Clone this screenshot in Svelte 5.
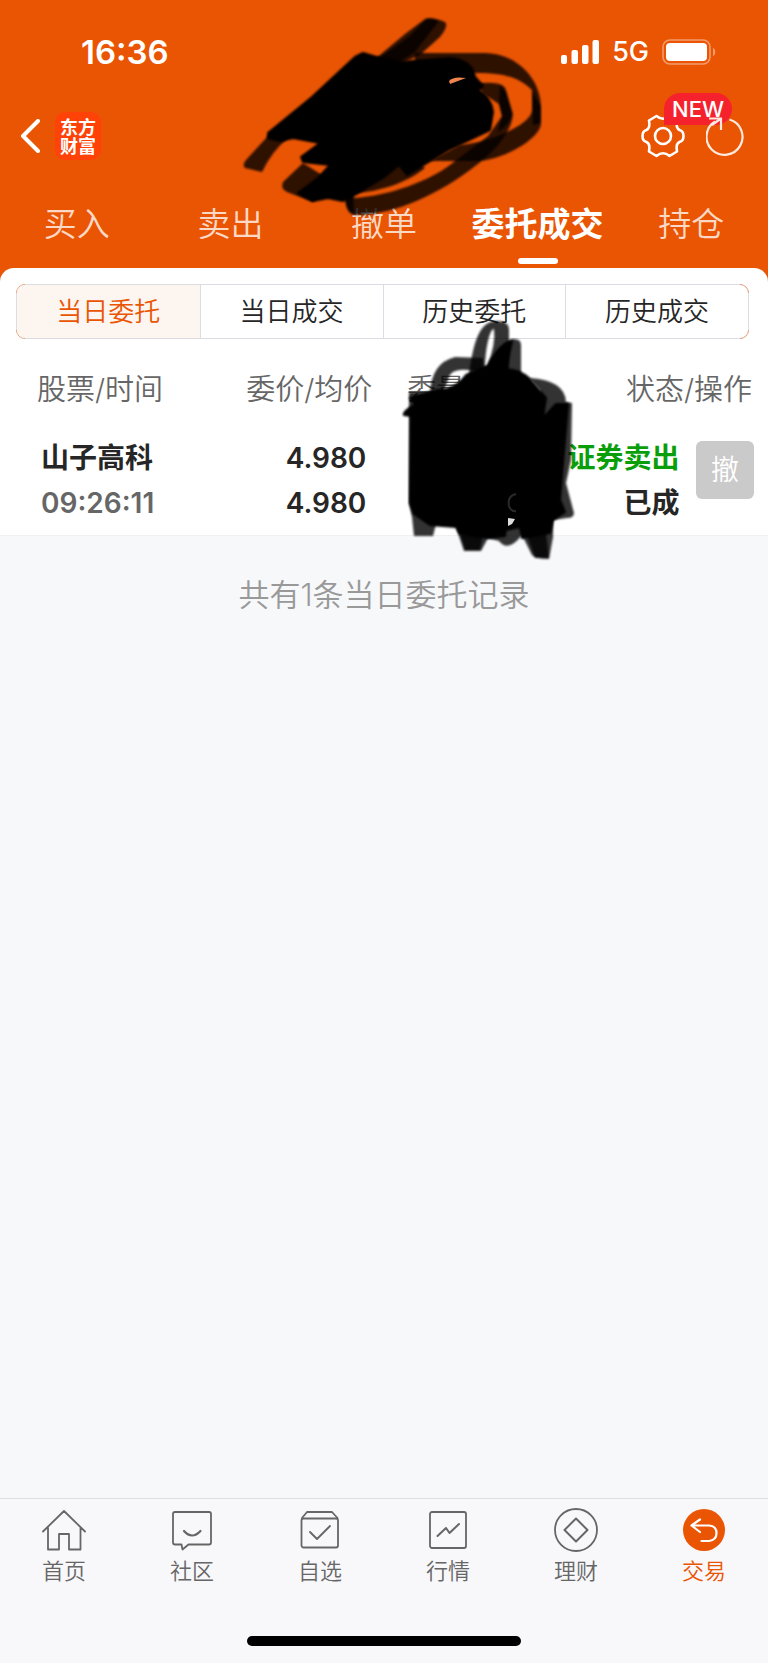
<script>
  let activeTab = $state('委托成交');
  let activeRange = $state('当日委托');
  let activeNav = $state('交易');

  const tabs = ['买入', '卖出', '撤单', '委托成交', '持仓'];
  const ranges = ['当日委托', '当日成交', '历史委托', '历史成交'];
  const navItems = ['首页', '社区', '自选', '行情', '理财', '交易'];

  const orders = [
    {
      name: '山子高科',
      time: '09:26:11',
      price: '4.980',
      average: '4.980',
      side: '证券卖出',
      status: '已成'
    }
  ];
</script>

<div class="app">
  <header class="header">
    <div class="status-bar">
      <span class="time">16:36</span>
      <div class="signals">
        <svg width="38" height="24" viewBox="0 0 38 24" fill="#fff" aria-hidden="true">
          <rect x="0" y="15" width="6" height="9" rx="2" />
          <rect x="10.5" y="10" width="6.5" height="14" rx="2" />
          <rect x="21" y="5" width="6.5" height="19" rx="2" />
          <rect x="31.5" y="0" width="6.5" height="24" rx="2" />
        </svg>
        <span class="network">5G</span>
        <svg width="54" height="26" viewBox="0 0 54 26" aria-hidden="true">
          <rect x="1" y="1" width="47" height="24" rx="7" fill="none" stroke="#f39b6c" stroke-width="1.6" />
          <rect x="4" y="4" width="41" height="18" rx="4" fill="#fff" />
          <path d="M51 9c3 1 3 7 0 8z" fill="#f39b6c" />
        </svg>
      </div>
    </div>

    <div class="toolbar">
      <button class="icon-btn" aria-label="返回">
        <svg width="20" height="34" viewBox="0 0 20 34" fill="none" stroke="#fff" stroke-width="4" stroke-linecap="round" stroke-linejoin="round">
          <path d="M18 2 3 17 18 32" />
        </svg>
      </button>
      <div class="logo">东方财富</div>
      <div class="actions">
        <button class="icon-btn" aria-label="设置">
          <svg width="44" height="44" viewBox="0 0 44 44" fill="none" stroke="#fff" stroke-width="2.6" stroke-linejoin="round">
            <path d="M15.500 2 Q22 7.500 28.500 2 L36 6.500 Q34.500 14 38.500 16 Q42.500 17 42.500 22 Q42.500 27 38.500 28 Q34.500 30 36 37.500 L28.500 42 Q22 36.500 15.500 42 L8 37.500 Q9.500 30 5.500 28 Q1.500 27 1.500 22 Q1.500 17 5.500 16 Q9.500 14 8 6.500 Z" />
            <circle cx="22" cy="22" r="8" />
          </svg>
        </button>
        <span class="badge">NEW</span>
        <button class="icon-btn refresh" aria-label="刷新">
          <svg width="38" height="40" viewBox="0 0 38 40" fill="none" stroke="#ffeadf" stroke-width="2.2">
            <path d="M23.500 3.500A18 18 0 1 1 9 5.500" />
            <path d="M3 2.500H15V14M15 2.500 6 9" />
          </svg>
        </button>
      </div>
    </div>

    <nav class="tabs">
      {#each tabs as tab}
        <button class="tab" class:active={activeTab === tab} onclick={() => (activeTab = tab)}>
          {tab}
        </button>
      {/each}
    </nav>

    <svg class="scribble scribble-top" width="310" height="220" viewBox="240 10 310 220" aria-hidden="true">
      <g class="marker">
        <path d="M425 19Q430 16 445 22Q449 26 440 37L421 54 380 75 362 70 405 34Z" />
        <path d="M410 36 425 20Q431 17 439 21L415 52 390 68 376 60Z" />
        <path d="M268 136 288 138Q272 151 262 172L245 168Q242 165 246 160Z" />
        <path d="M415 53H485C520 54 541 82 541 107V123C541 137 510 157 480 161H430L460 145C490 143 532 124 532 110V90C520 78 505 73 478 73H415Z" />
        <path d="M532 90 541 107V123L533 125Z" />
        <path d="M475 84Q503 80 506 90L513 114Q511 140 470 170C430 200 385 216 354 215Q345 213 345 195L352 190 354 198C390 196 430 180 450 165L488 136 502 116 499 104 485 95Z" />
        <path d="M500 85 506 92 512 114Q510 125 498 132L502 116 499 104Z" />
        <path d="M303 163 283 182Q280 189 287 192L313 202 330 180Z" />
        <path d="M354 193C380 192 408 182 425 168L405 150 350 180Z" />
        <path d="M345 194 353 190 354 214Q345 212 345 194Z" />
      </g>
      <path class="ink" d="M363 53 380 58 400 62 425 60 450 58Q472 60 475 77L483 86 478 90Q491 97 493 112L490 130 450 149 407 175 399 165 383 178 358 193 343 201 328 198 313 201 298 193 318 178 330 165 303 162 301 157 320 143 293 138 280 141 268 138V133L312 97 355 57Z" />
      <path d="M449 81Q453 76 466 78L458 81 450 84Z" fill="#ef844c" />
    </svg>
  </header>

  <main class="content">
    <div class="panel">
      <div class="segments">
        {#each ranges as range}
          <button class="segment" class:active={activeRange === range} onclick={() => (activeRange = range)}>
            {range}
          </button>
        {/each}
      </div>

      <table class="orders">
        <colgroup>
          <col class="w-stock" />
          <col class="w-price" />
          <col class="w-volume" />
          <col class="w-status" />
          <col class="w-action" />
        </colgroup>
        <thead>
          <tr>
            <th class="stock">股票/时间</th>
            <th class="price">委价/均价</th>
            <th class="volume">委量</th>
            <th class="status" colspan="2">状态/操作</th>
          </tr>
        </thead>
        <tbody>
          {#each orders as order}
            <tr>
              <td class="stock">{order.name}<br /><span class="muted">{order.time}</span></td>
              <td class="price">{order.price}<br />{order.average}</td>
              <td class="volume"></td>
              <td class="status"><span class="sell">{order.side}</span><br />{order.status}</td>
              <td class="action"><button class="cancel-btn">撤</button></td>
            </tr>
          {/each}
        </tbody>
      </table>

      <svg class="scribble scribble-row" width="180" height="250" viewBox="400 315 180 250" aria-hidden="true">
        <g class="marker">
          <path fill-rule="evenodd" d="M469 375C474 335 482 321 497 321Q509 321 509 330V380H469ZM485 366C486 345 490 329 494 329Q496 345 487 366Z" />
          <path d="M488 370Q496 345 512 339Q521 338 521 345V385H488Z" />
          <path d="M430 394Q431 363 455 357L483 358 484 373 468 370Q450 368 448 380L443 392Z" />
          <path d="M529 378Q565 380 566 402L572 403 571 460 566 483 574 513Q574 518 567 518L540 522V390Z" />
          <path d="M409 392H430L440 510 435 528 433 536H414L412 517 409 503Z" />
          <path d="M457 530 464 551H481L488 538 499 541Q508 553 522 535L532 555Q535 559 549 559L553 537 553 515H460Z" />
          <path d="M525 530 535 558H549L545 525Z" />
          <path d="M460 535 465 550H480L484 530Z" />
        </g>
        <path class="ink" d="M410 398 438 390Q455 390 466 375L488 366Q498 346 512 341L506 369Q525 371 532 382L546 398 543 418 556 404 568 404 560 500 565 512 553 520 550 533 522 538 520 527 506 530 509 522 508 514 505 536 488 538 460 534 456 527 430 525 414 514 410 503 411 416 404 415Q402 412 415 405Z" />
        <path d="M516 494Q507 496 509 506 511 512 516 511" fill="none" stroke="#2a2a2a" stroke-width="2" />
        <path d="M508 518 515 519 512 524 508 526Z" fill="#ddd" />
      </svg>
    </div>

    <p class="summary">共有1条当日委托记录</p>
  </main>

  <footer class="footer">
    <nav class="bottom-nav">
      {#each navItems as item}
        <button class="nav-item" class:active={activeNav === item} onclick={() => (activeNav = item)}>
          <svg width="44" height="44" viewBox="0 0 44 44" fill="none" stroke="#666" stroke-width="1.8" stroke-linejoin="round" stroke-linecap="round" aria-hidden="true">
            {#if item === '首页'}
              <path d="M1 23.500 22 3 43 23.500M6 19.500V41.500H17V26H27V41.500H38.500V19.500" />
            {:else if item === '社区'}
              <path d="M5 4H39Q41 4 41 6V34.500Q41 36.500 39 36.500H18.500L12.500 41.500 11.500 36.500H5Q3 36.500 3 34.500V6Q3 4 5 4Z" />
              <path d="M14 23Q22 32 30.500 23" stroke-width="2.2" />
            {:else if item === '自选'}
              <rect x="3.500" y="10.500" width="36.500" height="29" rx="2" />
              <path d="M4 10 9 4H34L39.500 10M12 24 19 31 32 18" />
            {:else if item === '行情'}
              <rect x="4" y="4" width="36" height="36" rx="2" />
              <path d="M11.500 28 20 20 23.500 25 33 16" stroke-width="2" />
            {:else if item === '理财'}
              <circle cx="22" cy="22" r="21" />
              <path d="M22 10.500 33.500 22 22 33.500 10.500 22Z" stroke-width="2" />
            {:else}
              <circle cx="22" cy="22" r="21" fill="#ea5504" stroke="none" />
              <path d="M18 11.500 9.500 17.500 18 24M10 17.500H27Q34.500 18 34.500 25T27 33H19.500" stroke="#fff" stroke-width="2.200" />
            {/if}
          </svg>
          <span>{item}</span>
        </button>
      {/each}
    </nav>
    <div class="home-indicator"></div>
  </footer>
</div>

<style>
  :global(body) {
    margin: 0;
  }

  .app {
    display: flex;
    flex-direction: column;
    min-height: 100vh;
    background: #f7f8fa;
    color: #262626;
    font-family: Inter, 'Noto Sans CJK SC', sans-serif;
  }

  button {
    margin: 0;
    padding: 0;
    border: none;
    background: none;
    color: inherit;
    font: inherit;
    cursor: pointer;
  }

  svg {
    display: block;
  }

  .header {
    position: relative;
    padding-bottom: 16px;
    background: #ea5504;
    color: #fff;
  }

  .status-bar {
    display: flex;
    align-items: center;
    justify-content: space-between;
    padding: 32px 52px 0 81px;
  }

  .time {
    font-size: 33px;
    font-weight: 600;
    line-height: 40px;
  }

  .signals {
    display: flex;
    align-items: center;
    gap: 13px;
  }

  .network {
    font-size: 27px;
    font-weight: 500;
    line-height: 40px;
  }

  .toolbar {
    display: flex;
    align-items: center;
    height: 48px;
    margin-top: 40px;
    padding: 0 24px 0 20px;
  }

  .logo {
    width: 36px;
    margin-left: 15px;
    padding: 5px;
    border-radius: 10px;
    background: #ff4208;
    font-family: 'Noto Sans CJK SC', sans-serif;
    font-size: 18px;
    font-weight: 700;
    line-height: 19px;
  }

  .actions {
    position: relative;
    display: flex;
    align-items: center;
    gap: 21px;
    margin-left: auto;
  }

  .badge {
    position: absolute;
    top: -21px;
    left: 23px;
    width: 68px;
    border-radius: 16px 16px 16px 0;
    background: #f5222d;
    font-size: 22px;
    font-weight: 500;
    line-height: 32px;
    text-align: center;
  }

  .refresh {
    position: relative;
  }

  .tabs {
    display: grid;
    grid-template-columns: repeat(5, 1fr);
    margin-top: 36px;
  }

  .tab {
    position: relative;
    height: 56px;
    color: #fbd9c6;
    font-size: 33px;
    font-weight: 350;
    line-height: 48px;
    white-space: nowrap;
  }

  .tab.active {
    color: #fff;
    font-weight: 700;
  }

  .tab.active::after {
    content: '';
    position: absolute;
    bottom: -12px;
    left: 50%;
    width: 40px;
    height: 6px;
    margin-left: -20px;
    border-radius: 3px;
    background: #fff;
  }

  .scribble {
    position: absolute;
    pointer-events: none;
  }

  .scribble-top {
    top: 10px;
    left: calc(50% - 144px);
  }

  .scribble-row {
    top: 47px;
    left: calc(50% + 16px);
    z-index: 1;
  }

  /* soft edge of the translucent marker pen */
  .marker {
    fill: #000;
    fill-opacity: 0.8;
    filter: blur(1px);
  }

  .ink {
    fill: #000;
    stroke: #000;
    stroke-width: 2;
    stroke-linejoin: round;
    filter: blur(1px);
  }

  .content {
    flex: 1;
    background: linear-gradient(#ea5504 20px, transparent 20px);
  }

  .panel {
    position: relative;
    padding-top: 16px;
    border-bottom: 1px solid #f0f0f2;
    border-radius: 14px 14px 0 0;
    background: #fff;
  }

  .segments {
    position: relative;
    display: grid;
    grid-template-columns: repeat(4, 1fr);
    margin: 0 19px 0 16px;
    border: 1px solid #e59a76;
    border-radius: 9px;
  }

  /* grey straight edges, the corners keep the accent colour */
  .segments::before {
    content: '';
    position: absolute;
    inset: -1px 8px;
    border: solid #dcdce2;
    border-width: 1px 0;
    pointer-events: none;
  }

  .segments::after {
    content: '';
    position: absolute;
    inset: 8px -1px;
    border: solid #dcdce2;
    border-width: 0 1px;
    pointer-events: none;
  }

  .segment {
    font-size: 26px;
    font-weight: 350;
    line-height: 53px;
    white-space: nowrap;
  }

  .segment + .segment {
    border-left: 1px solid #dcdce2;
  }

  .segment.active {
    border-radius: 8px 0 0 8px;
    background: #fcf5f0;
    color: #ea5504;
  }

  .orders {
    width: 100%;
    margin-top: 29px;
    border-collapse: collapse;
    table-layout: fixed;
    font-size: 28px;
    white-space: nowrap;
  }

  .w-stock {
    width: 27%;
  }

  .w-price {
    width: 22%;
  }

  .w-volume {
    width: 22%;
  }

  .w-status {
    width: 18%;
  }

  .w-action {
    width: 11%;
  }

  th {
    padding: 0 0 24px;
    color: #666;
    font-size: 29px;
    font-weight: 350;
    line-height: 44px;
    text-align: left;
  }

  td {
    padding: 0 0 9px;
    font-weight: 600;
    line-height: 45px;
    vertical-align: top;
  }

  th.stock {
    padding-left: 37px;
  }

  td.stock {
    padding-left: 41px;
  }

  .price,
  .status,
  .action {
    text-align: right;
  }

  th.price {
    padding-right: 4px;
  }

  td.price {
    padding-right: 10px;
  }

  .volume {
    padding-left: 31px;
  }

  th.status {
    padding-right: 16px;
  }

  td.status {
    padding-right: 4px;
  }

  .action {
    padding-right: 14px;
  }

  .muted {
    color: #666;
  }

  .sell {
    color: #0a9f0a;
  }

  .cancel-btn {
    width: 58px;
    height: 58px;
    margin-top: 5px;
    border-radius: 6px;
    background: #cacaca;
    color: #fff;
    font-size: 28px;
    font-weight: 350;
    line-height: 58px;
  }

  .summary {
    margin: 35px 0 0;
    color: #999;
    font-size: 31px;
    font-weight: 350;
    line-height: 48px;
    text-align: center;
  }

  .footer {
    border-top: 1px solid #dedfe2;
    background: #f8f8fb;
  }

  .bottom-nav {
    display: grid;
    grid-template-columns: repeat(6, 1fr);
    padding-top: 9px;
  }

  .nav-item {
    display: flex;
    flex-direction: column;
    align-items: center;
    gap: 3px;
    color: #666;
    font-size: 22px;
    font-weight: 350;
    line-height: 32px;
  }

  .nav-item.active {
    color: #ea5504;
  }

  .home-indicator {
    width: 274px;
    height: 10px;
    margin: 49px auto 17px;
    border-radius: 5px;
    background: #000;
  }
</style>
